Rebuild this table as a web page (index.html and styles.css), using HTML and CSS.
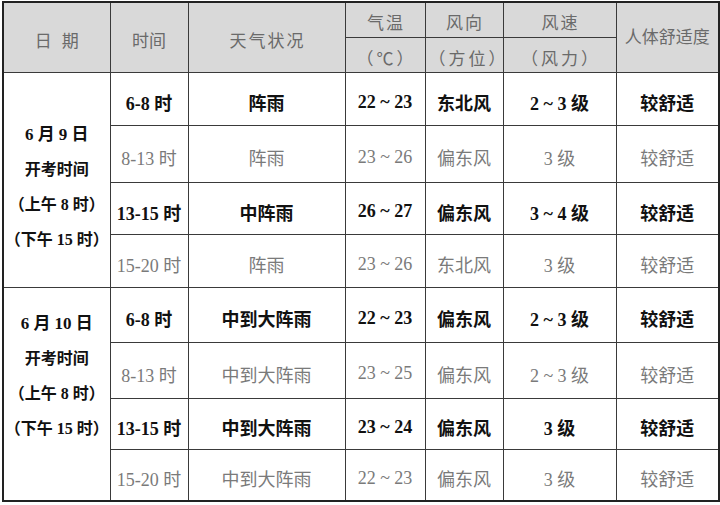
FILE: index.html
```html
<!DOCTYPE html>
<html lang="zh">
<head>
<meta charset="utf-8">
<link rel="stylesheet" href="styles.css">
</head>
<body>
<div class="wrap">
<table class="wx">
  <colgroup>
    <col class="c1"><col class="c2"><col class="c3"><col class="c4"><col class="c5"><col class="c6"><col class="c7">
  </colgroup>
  <thead>
    <tr class="h1">
      <th rowspan="2" class="sp">日期</th>
      <th rowspan="2">时间</th>
      <th rowspan="2" class="sp1">天气状况</th>
      <th class="sp1">气温</th>
      <th class="sp1">风向</th>
      <th class="sp1">风速</th>
      <th rowspan="2" class="up">人体舒适度</th>
    </tr>
    <tr class="h2">
      <th class="par">（℃）</th>
      <th class="par">（方位）</th>
      <th class="par">（风力）</th>
    </tr>
  </thead>
  <tbody>
    <tr class="b r1">
      <td rowspan="4" class="date d1">
        <div class="dl big">6 月 9 日</div>
        <div class="dl">开考时间</div>
        <div class="dl">（上午 8 时）</div>
        <div class="dl">（下午 15 时）</div>
      </td>
      <td>6-8 时</td><td>阵雨</td><td>22 ~ 23</td><td>东北风</td><td>2 ~ 3 级</td><td>较舒适</td>
    </tr>
    <tr class="n r2">
      <td>8-13 时</td><td>阵雨</td><td>23 ~ 26</td><td>偏东风</td><td>3 级</td><td>较舒适</td>
    </tr>
    <tr class="b r3">
      <td>13-15 时</td><td>中阵雨</td><td>26 ~ 27</td><td>偏东风</td><td>3 ~ 4 级</td><td>较舒适</td>
    </tr>
    <tr class="n r4">
      <td>15-20 时</td><td>阵雨</td><td>23 ~ 26</td><td>东北风</td><td>3 级</td><td>较舒适</td>
    </tr>
    <tr class="b r5">
      <td rowspan="4" class="date d2">
        <div class="dl big">6 月 10 日</div>
        <div class="dl">开考时间</div>
        <div class="dl">（上午 8 时）</div>
        <div class="dl">（下午 15 时）</div>
      </td>
      <td>6-8 时</td><td>中到大阵雨</td><td>22 ~ 23</td><td>偏东风</td><td>2 ~ 3 级</td><td>较舒适</td>
    </tr>
    <tr class="n r6">
      <td>8-13 时</td><td>中到大阵雨</td><td>23 ~ 25</td><td>偏东风</td><td>2 ~ 3 级</td><td>较舒适</td>
    </tr>
    <tr class="b r7">
      <td>13-15 时</td><td>中到大阵雨</td><td>23 ~ 24</td><td>偏东风</td><td>3 级</td><td>较舒适</td>
    </tr>
    <tr class="n r8">
      <td>15-20 时</td><td>中到大阵雨</td><td>22 ~ 23</td><td>偏东风</td><td>3 级</td><td>较舒适</td>
    </tr>
  </tbody>
</table>
</div>
</body>
</html>
```

FILE: styles.css
```css
html, body {
  margin: 0;
  padding: 0;
  background: #ffffff;
}
.wrap {
  padding: 1px 0 0 2px;
}
.wx {
  border-collapse: collapse;
  table-layout: fixed;
  width: 716px;
  font-family: "Liberation Serif", "Noto Sans CJK SC", serif;
  border: 2px solid #222;
}
.c1 { width: 107px; }
.c2 { width: 78px; }
.c3 { width: 157px; }
.c4 { width: 80px; }
.c5 { width: 78px; }
.c6 { width: 113px; }
.c7 { width: 103px; }

.wx th, .wx td {
  border: 1.5px solid #3a3a3a;
  padding: 0;
  text-align: center;
  vertical-align: middle;
}
.wx th {
  background: #d9d9d9;
  color: #6a6a6a;
  font-weight: 400;
  font-size: 17px;
}
.h1 { height: 35px; }
.h2 { height: 35px; }
.wx .h1 th { padding-top: 4px; }
.wx .h1 th.up { padding-top: 0; padding-bottom: 4px; }
.wx .h2 th { padding-top: 6px; }
.sp { letter-spacing: 10px; text-indent: 10px; }
.sp1 { letter-spacing: 2px; text-indent: 2px; }
.par { letter-spacing: 3px; text-indent: 3px; }
.up { white-space: nowrap; letter-spacing: 0; }

.wx td {
  font-size: 18px;
  padding-top: 7px;
}
.b td { color: #111; font-weight: 700; }
.n td { color: #7a7a7a; font-weight: 400; }

.r1 { height: 53px; }
.r2 { height: 57px; }
.r3 { height: 52px; }
.r4 { height: 53px; }
.r5 { height: 55px; }
.r6 { height: 56px; }
.r7 { height: 51px; }
.r8 { height: 52px; }

.wx td.date {
  color: #111;
  font-weight: 700;
  font-size: 16px;
  vertical-align: top;
}
.wx td.d1 { padding-top: 44px; }
.wx td.d2 { padding-top: 18px; }
.dl {
  height: 35px;
  line-height: 35px;
  white-space: nowrap;
}
.dl.big { font-size: 17px; }
```
